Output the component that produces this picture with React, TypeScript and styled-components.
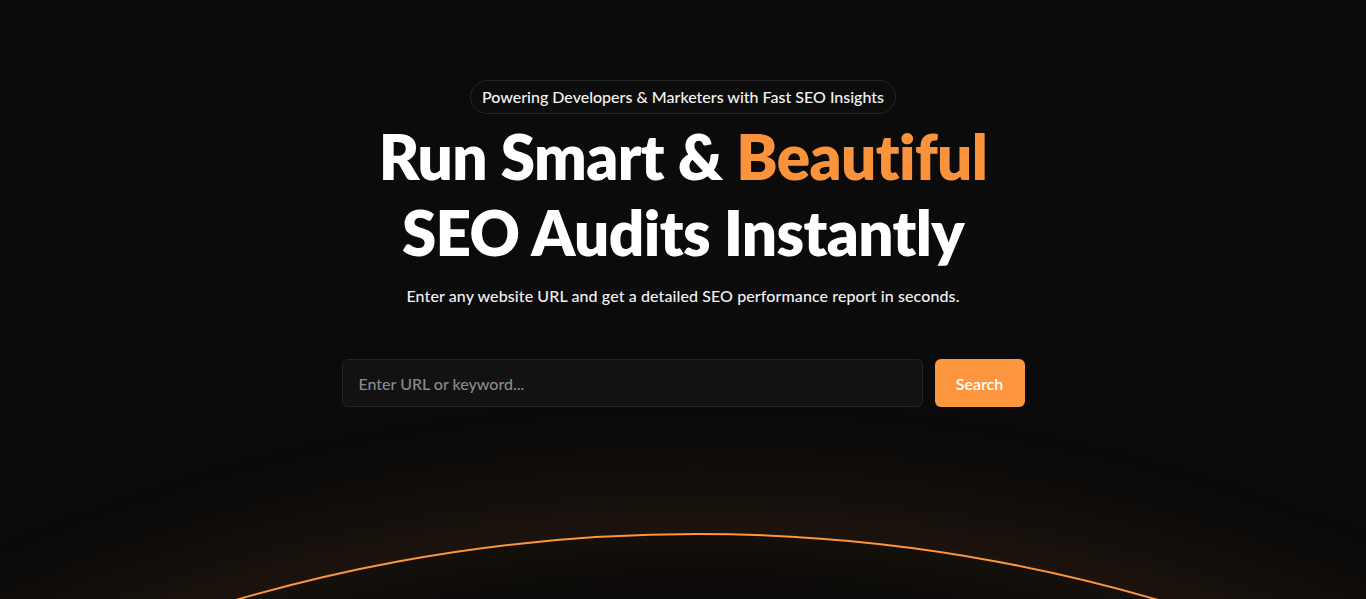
import React from "react";
import styled, { createGlobalStyle } from "styled-components";

const Global = createGlobalStyle`
  html, body { margin: 0; padding: 0; background: #0b0b0b; }
  body { font-family: "Lato", "Noto Sans", sans-serif; color: #fff; }
  * { box-sizing: border-box; }
`;

const Hero = styled.main`
  height: 599px;
  overflow: hidden;
  display: flex;
  flex-direction: column;
  align-items: center;
  padding-top: 80px;
  background: #0b0b0b;
`;

const Badge = styled.div`
  height: 34px;
  padding: 0 11px;
  display: flex;
  align-items: center;
  border: 1px solid #262626;
  border-radius: 999px;
  background: #0d0d0d;
  font-size: 16px;
  font-weight: 500;
  color: #f5f5f5;
  line-height: 1;
`;

const Title = styled.h1`
  margin: 4px 0 0;
  font-size: 62px;
  line-height: 76px;
  font-weight: 800;
  text-align: center;
  letter-spacing: -0.6px;
  color: #ffffff;
`;

const Accent = styled.span`
  color: #fb923c;
`;

const Subtitle = styled.p`
  margin: 14px 0 0;
  font-size: 16px;
  line-height: 24px;
  font-weight: 500;
  letter-spacing: 0.1px;
  color: #f2f2f2;
`;

const Form = styled.form`
  margin-top: 51px;
  display: flex;
  gap: 12px;
  width: 683px;
`;

const Input = styled.input`
  flex: 1;
  height: 48px;
  padding: 0 16px;
  border: 1px solid #242424;
  border-radius: 6px;
  background: #121212;
  color: #fff;
  font-family: inherit;
  font-size: 16px;
  font-weight: 500;
  outline: none;
  &::placeholder { color: #8a8a8a; }
`;

const Button = styled.button`
  width: 90px;
  height: 48px;
  border: none;
  border-radius: 6px;
  background: #fd963f;
  color: #fff;
  font-family: inherit;
  font-size: 16px;
  font-weight: 600;
  cursor: pointer;
`;

const Horizon = styled.div`
  flex: 1;
  width: 100%;
  display: flex;
  justify-content: center;
  overflow: hidden;
  min-height: 0;
`;

const Ring = styled.div`
  flex-shrink: 0;
  margin-top: 126px;
  margin-left: 28px;
  width: 3290px;
  height: 3290px;
  border-radius: 50%;
  border: 2.5px solid #fd963f;
  box-shadow: 0 0 120px 34px rgba(250, 130, 40, 0.1), inset 0 0 60px 6px rgba(250, 130, 40, 0.05);
  background: radial-gradient(ellipse 700px 140px at 50% 70px, #0c0b0a 0%, #100e0c 70%, #130f0c 100%);
`;

export default function App() {
  return (
    <>
      <Global />
      <Hero>
        <Badge>Powering Developers &amp; Marketers with Fast SEO Insights</Badge>
        <Title>
          Run Smart &amp; <Accent>Beautiful</Accent>
          <br />
          SEO Audits Instantly
        </Title>
        <Subtitle>Enter any website URL and get a detailed SEO performance report in seconds.</Subtitle>
        <Form onSubmit={(e) => e.preventDefault()}>
          <Input placeholder="Enter URL or keyword..." />
          <Button type="submit">Search</Button>
        </Form>
        <Horizon>
          <Ring />
        </Horizon>
      </Hero>
    </>
  );
}
